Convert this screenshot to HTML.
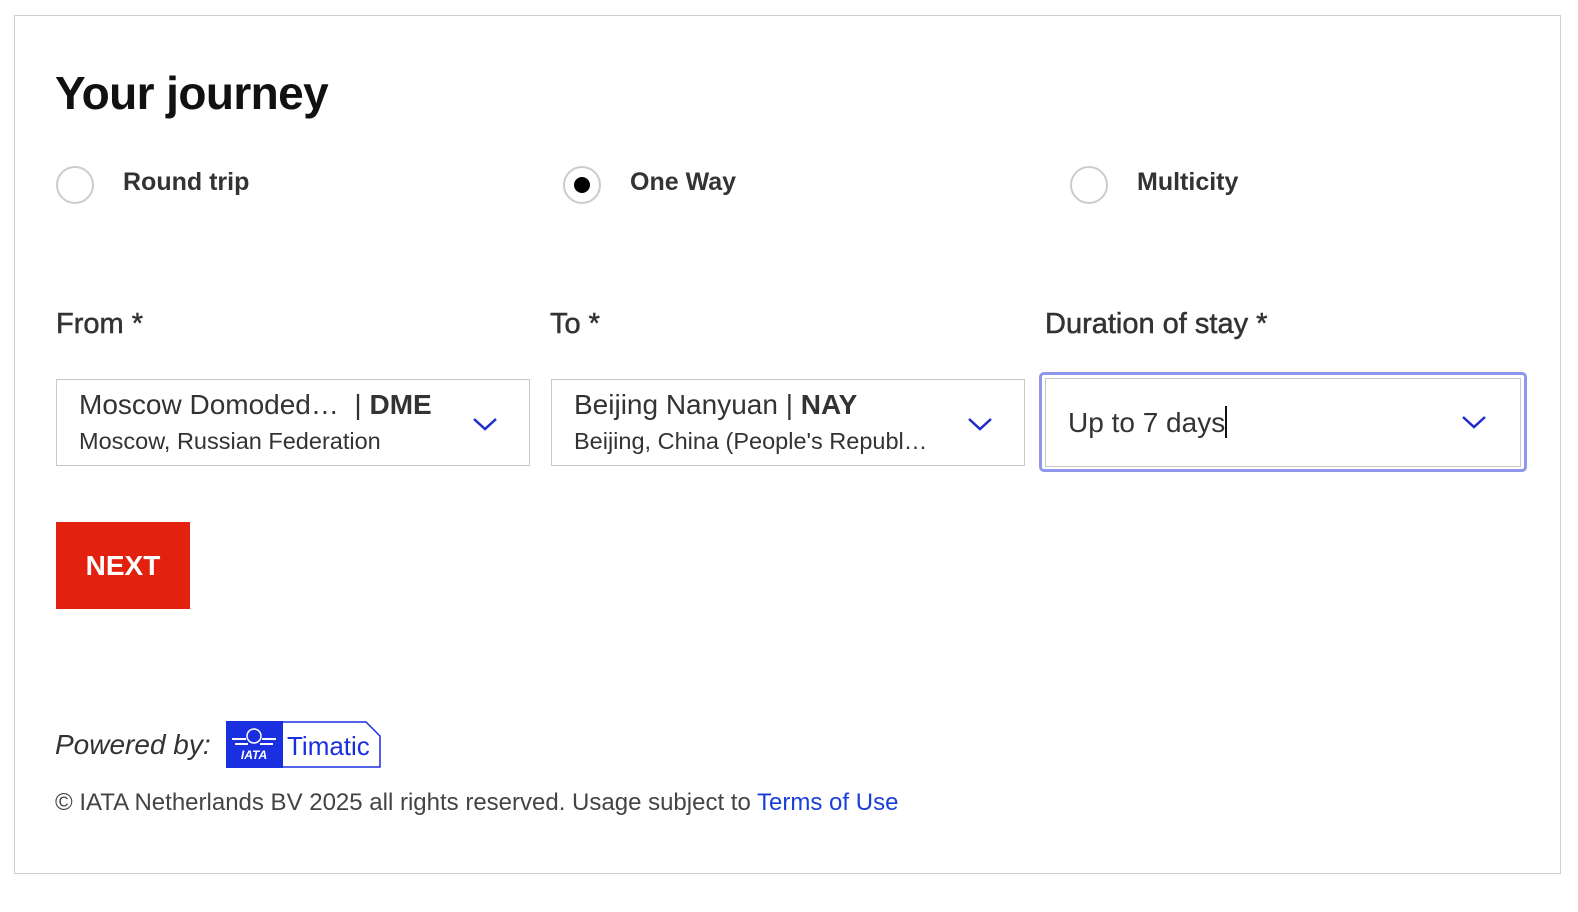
<!DOCTYPE html>
<html style="overflow:hidden"><head><style>
html,body{margin:0;width:1578px;height:912px;overflow:hidden}
body{background:#fff;font-family:"Liberation Sans",sans-serif;color:#222;position:relative}
.a{position:absolute}
.frame{left:14px;top:15px;width:1545px;height:857px;border:1.5px solid #cfcfcf}
h1{position:absolute;left:55px;top:66px;margin:0;font-size:46px;font-weight:bold;letter-spacing:-0.6px;color:#111}
.radio{width:38px;height:38px;border:2px solid #ccc;border-radius:50%;box-sizing:border-box}
.rl{font-size:25px;font-weight:bold;color:#333}
.lbl{font-size:29px;color:#333;-webkit-text-stroke:0.5px #333}
.box{border:1.5px solid #c8c8c8;box-sizing:border-box;background:#fff}
.t1{font-size:28px;color:#333;white-space:nowrap}
.t2{font-size:23.5px;color:#333;white-space:nowrap}
</style></head><body>
<div class="a frame"></div>
<h1>Your journey</h1>
<div class="a radio" style="left:56px;top:166px"></div>
<div class="a rl" style="left:123px;top:168px">Round trip</div>
<div class="a radio" style="left:563px;top:166px"><div class="a" style="left:9px;top:9px;width:16px;height:16px;border-radius:50%;background:#000"></div></div>
<div class="a rl" style="left:630px;top:168px">One Way</div>
<div class="a radio" style="left:1070px;top:166px"></div>
<div class="a rl" style="left:1137px;top:168px">Multicity</div>

<div class="a lbl" style="left:56px;top:308px">From *</div>
<div class="a lbl" style="left:550px;top:308px">To *</div>
<div class="a lbl" style="left:1045px;top:308px">Duration of stay *</div>

<div class="a box" style="left:56px;top:379px;width:474px;height:87px">
<div class="a t1" style="left:22px;top:9px">Moscow Domoded… &nbsp;| <b>DME</b></div>
<div class="a t2" style="left:22px;top:48px">Moscow, Russian Federation</div>
<svg class="a" style="left:414px;top:35px" width="28" height="18"><path d="M3 4l11 10 11-10" stroke="#1f2ccc" stroke-width="2.5" fill="none"/></svg>
</div>
<div class="a box" style="left:551px;top:379px;width:474px;height:87px">
<div class="a t1" style="left:22px;top:9px">Beijing Nanyuan | <b>NAY</b></div>
<div class="a t2" style="left:22px;top:48px">Beijing, China (People's Republ…</div>
<svg class="a" style="left:414px;top:35px" width="28" height="18"><path d="M3 4l11 10 11-10" stroke="#1f2ccc" stroke-width="2.5" fill="none"/></svg>
</div>
<div class="a" style="left:1039px;top:372px;width:482px;height:94px;border:3px solid #8e97ec;border-radius:5px"></div>
<div class="a box" style="left:1045px;top:378px;width:476px;height:89px">
<div class="a t1" style="left:22px;top:27px">Up to 7 days<span style="display:inline-block;width:2px;height:32px;background:#111;vertical-align:-6px"></span></div>
<svg class="a" style="left:414px;top:34px" width="28" height="18"><path d="M3 4l11 10 11-10" stroke="#1f2ccc" stroke-width="2.5" fill="none"/></svg>
</div>

<div class="a" style="left:56px;top:522px;width:134px;height:87px;background:#e3210f;color:#fff;font-weight:bold;font-size:28px;text-align:center;line-height:87px">NEXT</div>

<div class="a" style="left:55px;top:729px;font-size:28px;font-style:italic;color:#333">Powered by:</div>
<div class="a" style="left:226px;top:721px;width:154px;height:46px">
<svg width="156" height="48" class="a" style="left:0;top:0"><path d="M56 1H140L154 15V46H56Z" fill="#fff" stroke="#1a2fe0" stroke-width="1.5"/><rect x="0" y="0" width="57" height="47" fill="#1a2fe0"/>
<circle cx="28" cy="15" r="7" fill="none" stroke="#fff" stroke-width="1.5"/><path d="M6 18h14M36 18h14M9 23h13M34 23h13" stroke="#fff" stroke-width="2"/>
<text x="28" y="38" fill="#fff" font-size="12" font-weight="bold" font-style="italic" text-anchor="middle" font-family="Liberation Sans">IATA</text></svg>
<div class="a" style="left:61px;top:10px;font-size:26px;color:#1a2fe0">Timatic</div>
</div>
<div class="a" style="left:55px;top:789px;font-size:24px;color:#444">© IATA Netherlands BV 2025 all rights reserved. Usage subject to <span style="color:#1a3fd8">Terms of Use</span></div>
</body></html>
